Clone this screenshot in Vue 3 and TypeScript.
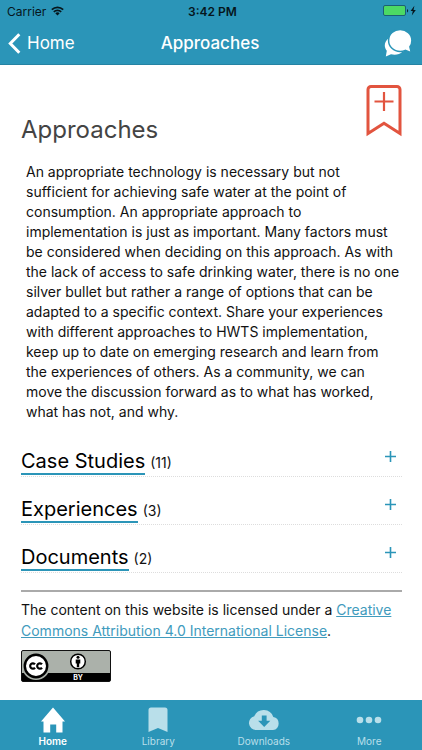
<script setup lang="ts">
interface Section {
  title: string
  count: number
}

const sections: Section[] = [
  { title: 'Case Studies', count: 11 },
  { title: 'Experiences', count: 3 },
  { title: 'Documents', count: 2 },
]
</script>

<template>
  <div class="screen">
    <header class="top">
      <div class="status">
        <span class="carrier">
          Carrier
          <svg width="13" height="10" viewBox="0 0 13 10" aria-hidden="true">
            <g fill="none" stroke="#06161c" stroke-width="1.7">
              <path d="M.8 3.6a8.2 8.2 0 0 1 11.4 0" />
              <path d="M2.8 5.8a5.3 5.3 0 0 1 7.4 0" />
            </g>
            <path d="M6.5 9.4 4.3 7.2a3.2 3.2 0 0 1 4.4 0z" fill="#06161c" />
          </svg>
        </span>
        <span class="clock">3:42 PM</span>
        <span class="power">
          <svg width="36" height="12" viewBox="0 0 36 12" aria-hidden="true">
            <rect x="1.5" y=".5" width="22" height="10" rx="1.5" fill="#4cd964" stroke="#1c5f74" />
            <path d="M25 4v3.400c1.600-.4 1.600-3 0-3.400z" fill="#0b2730" />
            <path d="M32.400.8 28.600 6h2.200l-1 4.400L33.800 5h-2.300z" fill="#06161c" />
          </svg>
        </span>
      </div>
      <div class="nav">
        <button class="back" type="button">
          <svg width="13" height="21" viewBox="0 0 13 21" aria-hidden="true">
            <path d="M11.300 1.300 2.300 10.500l9 9.200" fill="none" stroke="#fff" stroke-width="3" />
          </svg>
          Home
        </button>
        <span class="nav-title">Approaches</span>
        <button class="chat" type="button" aria-label="Discussion">
          <svg width="28" height="28" viewBox="0 0 28 28" aria-hidden="true">
            <path d="M5 9C2 11 .6 14 .8 17c.2 1.800.9 3.300 2 4.700L1.800 27.400l5.200-2.200c4.200 1.200 8.800.2 11.600-2.800z" fill="#fff" />
            <path d="M16.200.4C9.900.4 4.600 5.200 4.600 11.400S9.700 22.600 16.200 22.600c1.900 0 3.500-.4 5.100-1.200l6 2.400-1.400-6c1.300-1.800 2-4 2-6.400C27.900 5.200 22.500.4 16.200.4z" fill="#fff" stroke="#2b95b8" stroke-width="1.500" />
          </svg>
        </button>
      </div>
    </header>

    <main class="content">
      <div class="heading">
        <h1>Approaches</h1>
        <button class="bookmark" type="button" aria-label="Add bookmark">
          <svg width="36" height="52" viewBox="0 0 36 52" aria-hidden="true">
            <path d="M2 48.500V4.500a3 3 0 0 1 3-3h26a3 3 0 0 1 3 3v44L18 38.200z" fill="none" stroke="#e2543f" stroke-width="3" />
            <path d="M18 7v19M8.500 16.500h19" stroke="#e2543f" stroke-width="2.200" />
          </svg>
        </button>
      </div>

      <p class="intro">
        An appropriate technology is necessary but not sufficient for achieving safe water at the
        point of consumption. An appropriate approach to implementation is just as important. Many
        factors must be considered when deciding on this approach. As with the lack of access to
        safe drinking water, there is no one silver bullet but rather a range of options that can be
        adapted to a specific context. Share your experiences with different approaches to HWTS
        implementation, keep up to date on emerging research and learn from the experiences of
        others. As a community, we can move the discussion forward as to what has worked, what has
        not, and why.
      </p>

      <div class="sections">
        <button v-for="s in sections" :key="s.title" class="section" type="button">
          <span class="section-title">{{ s.title }}</span>
          <span class="count">({{ s.count }})</span>
          <svg class="plus" width="11" height="11" viewBox="0 0 11 11" aria-hidden="true">
            <path d="M5.500 0v11M0 5.500h11" stroke="#2b95b8" stroke-width="1.600" />
          </svg>
        </button>
      </div>

      <footer class="license">
        <p>
          The content on this website is licensed under a
          <a href="#license">Creative Commons Attribution 4.0 International License</a>.
        </p>
        <svg class="badge" width="90" height="32" viewBox="0 0 90 32" role="img" aria-label="Creative Commons BY">
          <rect x=".5" y=".5" width="89" height="31" rx="1.500" fill="#abb1aa" stroke="#111" />
          <path d="M1 23h88v8H1z" fill="#000" />
          <circle cx="15" cy="16" r="14" fill="#abb1aa" />
          <circle cx="15" cy="16" r="11.200" fill="#fff" stroke="#000" stroke-width="2.400" />
          <g fill="none" stroke="#000" stroke-width="2.200">
            <path d="M14 14.300a2.700 2.700 0 1 0 0 3.400" />
            <path d="M21 14.300a2.700 2.700 0 1 0 0 3.400" />
          </g>
          <circle cx="57" cy="11.500" r="7.300" fill="#fff" stroke="#000" stroke-width="1.500" />
          <circle cx="57" cy="7.300" r="1.500" />
          <path d="M54.700 9.400h4.600v4.200h-1.100v3.700h-2.400v-3.700h-1.100z" />
          <text x="57" y="30" text-anchor="middle" class="badge-text">BY</text>
        </svg>
      </footer>
    </main>

    <nav class="tabs">
      <a class="tab active" href="#home">
        <svg width="26" height="26" viewBox="0 0 26 26" aria-hidden="true">
          <path d="M13 .5 25 14.500h-2.500v11h-6.300v-8h-6v8H3.500v-11H1z" fill="currentColor" />
        </svg>
        Home
      </a>
      <a class="tab" href="#library">
        <svg width="20" height="26" viewBox="0 0 20 26" aria-hidden="true">
          <path d="M.5 25V3a2.500 2.500 0 0 1 2.500-2.500h14A2.500 2.500 0 0 1 19.500 3v22L10 21z" fill="currentColor" />
        </svg>
        Library
      </a>
      <a class="tab" href="#downloads">
        <svg width="32" height="26" viewBox="0 0 32 26" aria-hidden="true">
          <path fill-rule="evenodd" d="M8 23a7 7 0 0 1-1.700-13.800A10.200 10.200 0 0 1 25.300 10 6.600 6.600 0 0 1 25 23zM13.800 8.500v5.300h-3.700l6.100 6.200 6.100-6.200h-3.700V8.500z" fill="currentColor" />
        </svg>
        Downloads
      </a>
      <a class="tab" href="#more">
        <svg width="26" height="26" viewBox="0 0 26 26" aria-hidden="true">
          <g fill="currentColor">
            <circle cx="4" cy="13" r="3.300" />
            <circle cx="13" cy="13" r="3.300" />
            <circle cx="22" cy="13" r="3.300" />
          </g>
        </svg>
        More
      </a>
    </nav>
  </div>
</template>

<style>
body {
  background: #fff;
}
</style>

<style scoped>
.screen {
  display: flex;
  flex-direction: column;
  min-height: 100vh;
  font-family: Inter, "Liberation Sans", sans-serif;
  font-size: 14px;
  color: #111;
}

button {
  margin: 0;
  padding: 0;
  border: 0;
  background: none;
  font: inherit;
  color: inherit;
  cursor: pointer;
}

svg {
  display: block;
}

.top {
  background: #2b95b8;
  border-bottom: 1px solid #2583a3;
}

.status {
  display: grid;
  grid-template-columns: 1fr auto 1fr;
  align-items: center;
  height: 22px;
  padding: 0 4px 0 7px;
  font-size: 12px;
  color: #06161c;
}

.carrier {
  display: flex;
  align-items: center;
  gap: 5px;
}

.clock {
  font-weight: 600;
}

.power {
  justify-self: end;
}

.nav {
  display: grid;
  grid-template-columns: 1fr auto 1fr;
  align-items: center;
  height: 42px;
  padding: 0 10px 0 8px;
  font-size: 17px;
  color: #fff;
}

.back {
  display: flex;
  align-items: center;
  gap: 6px;
}

.nav-title {
  font-weight: 500;
}

.chat {
  justify-self: end;
}

.content {
  flex: 1;
  padding: 20px 20px 18px 21px;
}

.heading {
  display: flex;
  justify-content: space-between;
  align-items: flex-start;
}

h1 {
  margin: 31px 0 0;
  font-size: 24px;
  line-height: 28px;
  font-weight: 400;
  color: #444;
}

.intro {
  margin: 18px 0 0;
  padding: 0 2px 0 5px;
  line-height: 20px;
}

.sections {
  margin-top: 22px;
}

.section {
  display: flex;
  align-items: baseline;
  gap: 5px;
  box-sizing: border-box;
  width: 100%;
  height: 33px;
  margin-bottom: 15px;
  padding-top: 5px;
  border-bottom: 1px dotted #ddd;
  text-align: left;
}

.section-title {
  font-size: 20px;
  line-height: 24px;
  color: #000;
  border-bottom: 2px solid #2b95b8;
}

.plus {
  align-self: flex-start;
  margin: 2px 6px 0 auto;
}

.license {
  margin-top: 17px;
  border-top: 2px solid #aaa;
}

.license p {
  margin: 7px 0 9px;
  line-height: 21px;
}

.license a {
  color: #419bbd;
}

.badge-text {
  font-size: 7px;
  font-weight: 700;
  fill: #fff;
}

.tabs {
  display: grid;
  grid-template-columns: repeat(4, 1fr);
  height: 50px;
  background: #2b95b8;
}

.tab {
  display: flex;
  flex-direction: column;
  align-items: center;
  padding-top: 7px;
  gap: 2px;
  font-size: 10px;
  line-height: 12px;
  color: #b9dfea;
  text-decoration: none;
}

.active {
  color: #fff;
  font-weight: 600;
}
</style>
